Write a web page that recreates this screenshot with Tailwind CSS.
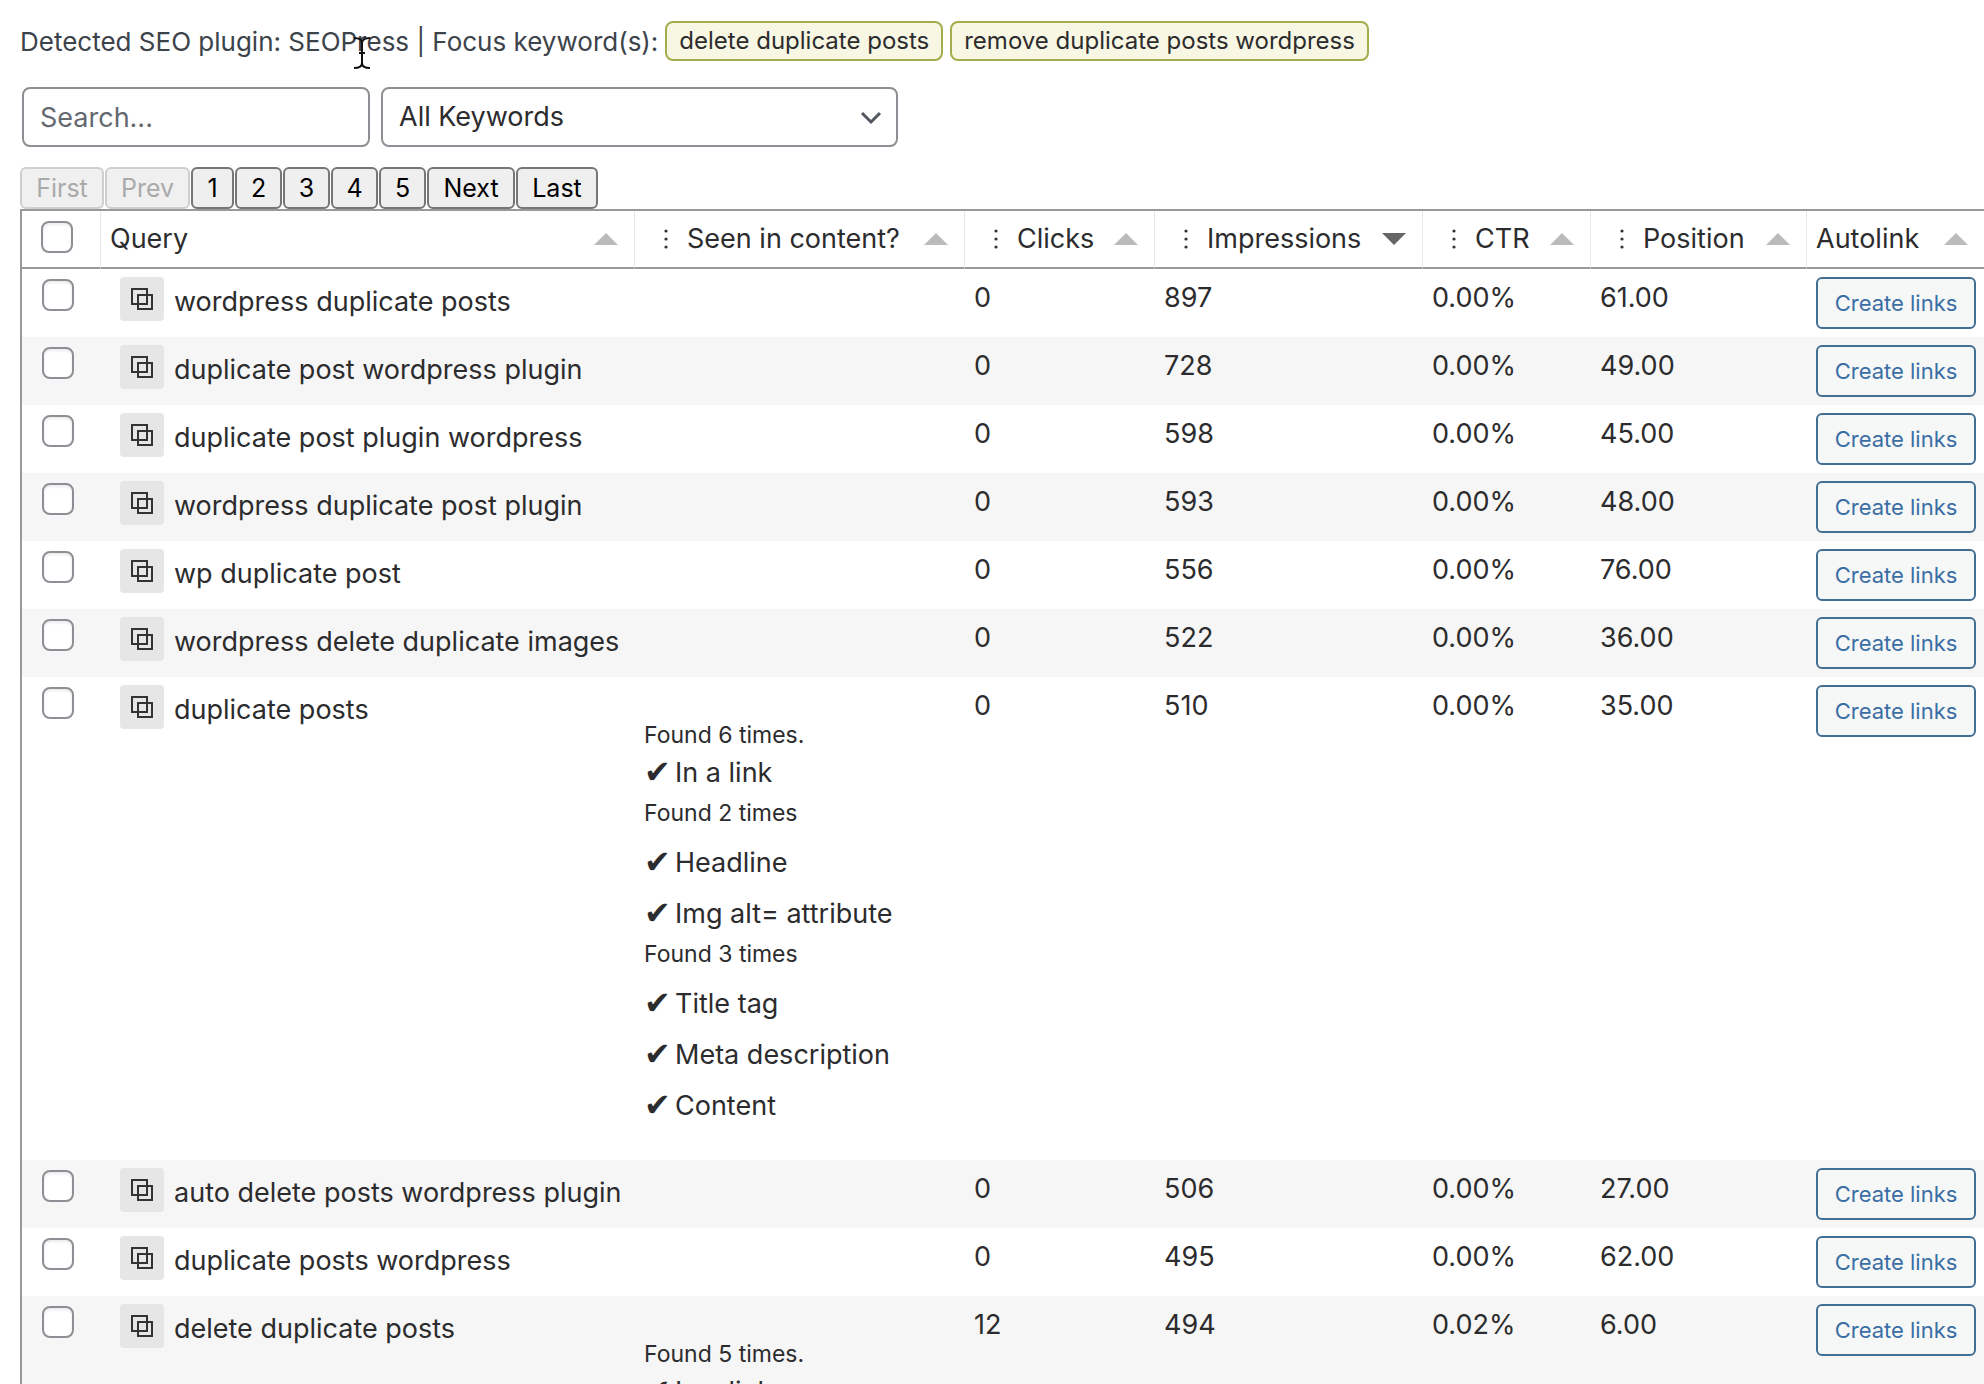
<!DOCTYPE html>
<html lang="en">
<head>
  <meta charset="UTF-8" />
  <title>Focus keywords</title>
  <meta name="viewport" content="width=device-width, initial-scale=1" />
  <script src="https://cdn.jsdelivr.net/npm/@tailwindcss/browser@4"></script>
</head>
<body class="h-screen overflow-hidden bg-white font-['Inter','Liberation_Sans',sans-serif] text-[27px] text-[#2c2c2e]">

  <!-- Detected plugin -->
  <div class="relative flex items-center gap-[7px] pl-5 pt-[21px] text-[24px]">
    <p class="text-[26px] text-[#3c434a]">Detected SEO plugin: SEOPress | Focus keyword(s):</p>
    <span class="flex h-10 items-center rounded-lg border-2 border-[#a3ad4c] bg-[#f8f7e3] px-3">delete duplicate posts</span>
    <span class="flex h-10 items-center rounded-lg border-2 border-[#a3ad4c] bg-[#f8f7e3] px-3">remove duplicate posts wordpress</span>
    <svg class="absolute left-[353px] top-[36px] h-[34px] w-[18px]" viewBox="0 0 18 34" fill="none" stroke="#111" stroke-width="2" aria-hidden="true">
      <path d="M1 2c5 0 8 2 8 5v20c0 3-3 5-8 5M17 2c-5 0-8 2-8 5M17 32c-5 0-8-2-8-5M6 17h6" />
    </svg>
  </div>

  <!-- Filters -->
  <div class="flex gap-[11px] pl-[22px] pt-[26px]">
    <input type="text" aria-label="Search" placeholder="Search..." class="h-[60px] w-[348px] rounded-lg border-2 border-[#8c8f94] bg-white px-4 placeholder:text-[#646970]" />
    <div class="relative">
      <select aria-label="Keyword filter" class="h-[60px] w-[517px] appearance-none rounded-lg border-2 border-[#8c8f94] bg-white px-4">
        <option>All Keywords</option>
      </select>
      <svg class="pointer-events-none absolute right-4 top-6 h-[14px] w-[22px]" viewBox="0 0 22 14" fill="none" stroke="#50575e" stroke-width="3" aria-hidden="true"><path d="M2 2l9 9 9-9" /></svg>
    </div>
  </div>

  <!-- Pager -->
  <nav class="flex gap-px pl-5 pt-5 text-[25px]" aria-label="Pages">
    <button disabled class="h-[42px] w-[84px] rounded-md border-2 border-[#cfcfcf] bg-[#f0f0f0] pt-px text-[#aaa]">First</button>
    <button disabled class="h-[42px] w-[85px] rounded-md border-2 border-[#cfcfcf] bg-[#f0f0f0] pt-px text-[#aaa]">Prev</button>
    <button class="h-[42px] w-[43px] rounded-md border-2 border-[#767676] bg-[#efefef] pt-px text-black">1</button>
    <button class="h-[42px] w-[47px] rounded-md border-2 border-[#767676] bg-[#efefef] pt-px text-black">2</button>
    <button class="h-[42px] w-[47px] rounded-md border-2 border-[#767676] bg-[#efefef] pt-px text-black">3</button>
    <button class="h-[42px] w-[47px] rounded-md border-2 border-[#767676] bg-[#efefef] pt-px text-black">4</button>
    <button class="h-[42px] w-[47px] rounded-md border-2 border-[#767676] bg-[#efefef] pt-px text-black">5</button>
    <button class="h-[42px] w-[88px] rounded-md border-2 border-[#767676] bg-[#efefef] pt-px text-black">Next</button>
    <button class="h-[42px] w-[82px] rounded-md border-2 border-[#767676] bg-[#efefef] pt-px text-black">Last</button>
  </nav>

  <!-- Keyword table -->
  <div class="ml-5 border-l-2 border-t-2 border-[#999]">
    <table class="w-full table-fixed border-separate border-spacing-0">
      <colgroup>
        <col class="w-[79px]" />
        <col />
        <col class="w-[330px]" />
        <col class="w-[190px]" />
        <col class="w-[268px]" />
        <col class="w-[168px]" />
        <col class="w-[216px]" />
        <col class="w-[177px]" />
      </colgroup>
      <thead>
        <tr id="head"></tr>
      </thead>
      <tbody id="rows"></tbody>
    </table>
  </div>

  <script>
    const columns = [
      { title: 'Query' },
      { title: 'Seen in content?', menu: true },
      { title: 'Clicks', menu: true },
      { title: 'Impressions', menu: true, sorted: true },
      { title: 'CTR', menu: true },
      { title: 'Position', menu: true },
      { title: 'Autolink', last: true }
    ];

    const rows = [
      { query: 'wordpress duplicate posts', clicks: 0, impressions: 897, ctr: '0.00%', position: '61.00' },
      { query: 'duplicate post wordpress plugin', clicks: 0, impressions: 728, ctr: '0.00%', position: '49.00' },
      { query: 'duplicate post plugin wordpress', clicks: 0, impressions: 598, ctr: '0.00%', position: '45.00' },
      { query: 'wordpress duplicate post plugin', clicks: 0, impressions: 593, ctr: '0.00%', position: '48.00' },
      { query: 'wp duplicate post', clicks: 0, impressions: 556, ctr: '0.00%', position: '76.00' },
      { query: 'wordpress delete duplicate images', clicks: 0, impressions: 522, ctr: '0.00%', position: '36.00' },
      {
        query: 'duplicate posts', clicks: 0, impressions: 510, ctr: '0.00%', position: '35.00',
        link: 'Found 6 times.',
        groups: [
          { title: 'Found 2 times', items: ['Headline', 'Img alt= attribute'] },
          { title: 'Found 3 times', items: ['Title tag', 'Meta description', 'Content'] }
        ]
      },
      { query: 'auto delete posts wordpress plugin', clicks: 0, impressions: 506, ctr: '0.00%', position: '27.00' },
      { query: 'duplicate posts wordpress', clicks: 0, impressions: 495, ctr: '0.00%', position: '62.00' },
      { query: 'delete duplicate posts', clicks: 12, impressions: 494, ctr: '0.02%', position: '6.00', link: 'Found 5 times.', groups: [] }
    ];

    const checkbox = (label) => `<input type="checkbox" aria-label="${label}" class="block size-8 appearance-none rounded-lg border-2 border-[#8c8f94] bg-white shadow-[inset_0_2px_3px_rgba(0,0,0,0.08)]" />`;

    const check = (text) => `<span class="flex h-[39px]"><span class="w-[31px] font-['DejaVu_Sans'] text-[32px] leading-[34px]">✔</span>${text}</span>`;

    const seen = (row) => !row.link ? '' : `
      <div class="pb-[33px] pt-[39px] leading-[35px]">
        <p class="text-[23px] leading-[39px]">${row.link}</p>
        ${check('In a link')}
        ${row.groups.map(g => `
          <p class="text-[23px] leading-[39px]">${g.title}</p>
          <ul>${g.items.map(i => `<li class="pt-3">${check(i)}</li>`).join('')}</ul>
        `).join('')}
      </div>`;

    document.getElementById('head').innerHTML =
      `<th class="h-[58px] border-b-2 border-r border-b-[#999] border-r-[#e8e8e8] pb-1 pl-[19px]">${checkbox('Select all')}</th>` +
      columns.map(c => `
        <th class="border-b-2 border-b-[#999] font-normal ${c.last ? '' : 'border-r border-r-[#e8e8e8]'}">
          <div class="flex items-center pr-4 ${c.menu ? 'pl-[29px]' : 'pl-[9px]'}">
            ${c.menu ? '<svg class="mr-[19px] h-[22px] w-1 shrink-0" viewBox="0 0 4 22" fill="#333" aria-hidden="true"><circle cx="2" cy="3" r="1.6" /><circle cx="2" cy="11" r="1.6" /><circle cx="2" cy="19" r="1.6" /></svg>' : ''}
            <span class="whitespace-nowrap">${c.title}</span>
            <svg class="ml-auto h-3 w-6 shrink-0" viewBox="0 0 24 12" aria-hidden="true">
              ${c.sorted ? '<path d="M0 0h24L12 12z" fill="#666" />' : '<path d="M0 12h24L12 0z" fill="#bbb" />'}
            </svg>
          </div>
        </th>`).join('');

    document.getElementById('rows').innerHTML = rows.map(r => `
      <tr class="align-top even:bg-[#f6f6f6]">
        <td class="h-[68px] pl-5 pt-[10px]">${checkbox(r.query)}</td>
        <td class="pl-[19px] pt-2">
          <div class="flex gap-[10px]">
            <button aria-label="Copy" class="flex size-11 shrink-0 items-center justify-center rounded bg-[#e6e6e6]">
              <svg class="size-6" viewBox="0 0 24 24" fill="none" stroke="#333" stroke-width="2" aria-hidden="true"><path d="M2 2h15v15H2zM8 8h14v14H8z" /></svg>
            </button>
            <span class="whitespace-nowrap leading-[50px]">${r.query}</span>
          </div>
        </td>
        <td class="pl-[9px]">${seen(r)}</td>
        <td class="pl-[9px] pt-2 leading-[41px]">${r.clicks}</td>
        <td class="pl-[9px] pt-2 leading-[41px]">${r.impressions}</td>
        <td class="pl-[9px] pt-2 leading-[41px]">${r.ctr}</td>
        <td class="pl-[9px] pt-2 leading-[41px]">${r.position}</td>
        <td class="pl-[9px] pt-2">
          <button class="block h-[52px] w-40 rounded-md border-2 border-[#446f94] bg-[#f6f7f7] text-[22px] text-[#3a6ea5]">Create links</button>
        </td>
      </tr>`).join('');
  </script>

</body>
</html>
